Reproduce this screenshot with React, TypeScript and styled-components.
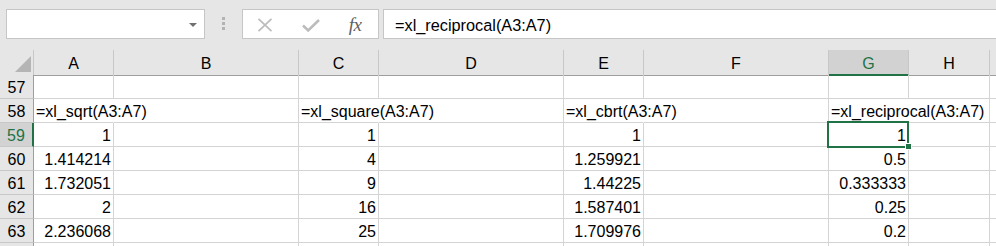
import React from 'react';
import styled, { createGlobalStyle } from 'styled-components';

const GlobalStyle = createGlobalStyle`
  html, body { margin: 0; padding: 0; overflow: hidden; }
  body {
    background: #e6e6e6;
    font-family: "Liberation Sans", Arial, sans-serif;
    color: #000;
  }
`;

const COLS = '34px 80px 185px 80px 185px 80px 185px 80px 81px 1fr';
const GREEN = '#217346';

const Window = styled.div`
  width: 996px;
  height: 246px;
  overflow: hidden;
  display: flex;
  flex-direction: column;
  background: #e6e6e6;
`;

const Toolbar = styled.div`
  display: flex;
  align-items: flex-start;
  height: 50px;
  flex-shrink: 0;
  box-sizing: border-box;
  padding: 9px 0 0 6px;
`;

const Field = styled.div`
  height: 30px;
  box-sizing: border-box;
  background: #fff;
  border: 1px solid #c6c6c6;
`;

const NameBox = styled(Field)`
  width: 199px;
  display: flex;
  align-items: center;
  justify-content: flex-end;
  padding-right: 7px;
`;

const Caret = styled.span`
  width: 0;
  height: 0;
  margin-top: 1px;
  border-left: 4px solid transparent;
  border-right: 4px solid transparent;
  border-top: 4px solid #707070;
`;

const Grip = styled.div`
  width: 37px;
  display: flex;
  flex-direction: column;
  align-items: center;
  gap: 2px;
  padding-top: 8px;
`;

const GripDot = styled.span`
  width: 3px;
  height: 3px;
  background: #b3b3b3;
`;

const FxBox = styled(Field)`
  width: 137px;
  display: flex;
  align-items: center;
  padding: 2px 0 0 14px;
`;

const IconSlot = styled.span<{ $w: number; $gap: number }>`
  width: ${p => p.$w}px;
  margin-right: ${p => p.$gap}px;
  display: flex;
  align-items: center;
  justify-content: center;
`;

const FxLabel = styled.span`
  font-family: "Liberation Serif", "Times New Roman", serif;
  font-style: italic;
  font-size: 19px;
  line-height: 20px;
  color: #5f5f5f;
  letter-spacing: -0.5px;
`;

const FormulaBox = styled(Field)`
  flex: 1;
  margin-left: 4px;
  margin-right: -10px;
  padding: 3px 0 0 11px;
  font-size: 16.3px;
  line-height: 25px;
  white-space: nowrap;
`;

const Sheet = styled.div`
  display: flex;
  flex-direction: column;
  background: #fff;
`;

const HeaderRow = styled.div`
  display: grid;
  grid-template-columns: ${COLS};
  height: 25px;
  background: #e6e6e6;
`;

const ColHeader = styled.div<{ $sel?: boolean; $last?: boolean }>`
  box-sizing: border-box;
  border-right: ${p => (p.$last ? 'none' : '1px solid #c8c8c8')};
  border-bottom: ${p => (p.$sel ? `2px solid ${GREEN}` : '1px solid #9e9e9e')};
  background: ${p => (p.$sel ? '#d2d2d2' : '#e6e6e6')};
  color: ${p => (p.$sel ? GREEN : '#000')};
  text-align: center;
  padding-top: 3px;
  font-size: 16px;
  line-height: 21px;
`;

const Corner = styled(ColHeader)`
  display: flex;
  justify-content: flex-end;
  align-items: flex-end;
  padding: 0 2px 3px 0;
`;

const CornerTriangle = styled.span`
  width: 0;
  height: 0;
  border-left: 16px solid transparent;
  border-bottom: 16px solid #b5b5b5;
`;

const BodyRow = styled.div`
  display: grid;
  grid-template-columns: ${COLS};
  height: 24px;
`;

const RowHeader = styled.div<{ $sel?: boolean }>`
  box-sizing: border-box;
  border-right: ${p => (p.$sel ? `2px solid ${GREEN}` : '1px solid #9e9e9e')};
  border-bottom: 1px solid #c8c8c8;
  background: ${p => (p.$sel ? '#d2d2d2' : '#e6e6e6')};
  color: ${p => (p.$sel ? GREEN : '#000')};
  text-align: center;
  padding-top: 2px;
  font-size: 16px;
  line-height: 21px;
`;

const Cell = styled.div<{ $align: 'left' | 'right'; $spill?: boolean; $last?: boolean; $active?: boolean }>`
  box-sizing: border-box;
  position: ${p => (p.$active ? 'relative' : 'static')};
  border-right: ${p => (p.$last ? 'none' : p.$spill ? '1px solid transparent' : '1px solid #d4d4d4')};
  border-bottom: 1px solid #d4d4d4;
  padding: 2px 2px 0 2px;
  text-align: ${p => p.$align};
  font-size: 16px;
  line-height: 21px;
  white-space: nowrap;
  overflow: visible;
`;

const Selection = styled.span`
  position: absolute;
  left: -2px;
  top: -2px;
  right: -1px;
  bottom: -2px;
  border: 2px solid ${GREEN};
  pointer-events: none;
`;

const FillHandle = styled.span`
  position: absolute;
  right: -4px;
  bottom: -4px;
  width: 5px;
  height: 5px;
  background: ${GREEN};
  border: 1px solid #fff;
`;

const LETTERS = ['A', 'B', 'C', 'D', 'E', 'F', 'G', 'H', ''];

type RowData = { n: number; label: string; values: Record<string, string> };

const ROWS: RowData[] = [
  { n: 57, label: '57', values: {} },
  { n: 58, label: '58', values: { A: '=xl_sqrt(A3:A7)', C: '=xl_square(A3:A7)', E: '=xl_cbrt(A3:A7)', G: '=xl_reciprocal(A3:A7)' } },
  { n: 59, label: '59', values: { A: '1', C: '1', E: '1', G: '1' } },
  { n: 60, label: '60', values: { A: '1.414214', C: '4', E: '1.259921', G: '0.5' } },
  { n: 61, label: '61', values: { A: '1.732051', C: '9', E: '1.44225', G: '0.333333' } },
  { n: 62, label: '62', values: { A: '2', C: '16', E: '1.587401', G: '0.25' } },
  { n: 63, label: '63', values: { A: '2.236068', C: '25', E: '1.709976', G: '0.2' } },
  { n: 64, label: '', values: {} },
];

const isText = (v?: string) => !!v && v.startsWith('=');

const CancelIcon = () => (
  <svg width="16" height="14" viewBox="0 0 16 14">
    <path d="M1.5 0.8 L14.5 13.2 M14.5 0.8 L1.5 13.2" stroke="#bcbcbc" strokeWidth="1.7" fill="none" />
  </svg>
);

const EnterIcon = () => (
  <svg width="18" height="13" viewBox="0 0 18 13">
    <path d="M1 6.5 L6.2 11.4 L17 1" stroke="#bcbcbc" strokeWidth="2.6" fill="none" strokeLinejoin="miter" />
  </svg>
);

export default function App() {
  return (
    <>
      <GlobalStyle />
      <Window>
        <Toolbar>
          <NameBox>
            <Caret />
          </NameBox>
          <Grip>
            <GripDot />
            <GripDot />
            <GripDot />
          </Grip>
          <FxBox>
            <IconSlot $w={16} $gap={29}>
              <CancelIcon />
            </IconSlot>
            <IconSlot $w={18} $gap={26}>
              <EnterIcon />
            </IconSlot>
            <IconSlot $w={18} $gap={0}>
              <FxLabel>fx</FxLabel>
            </IconSlot>
          </FxBox>
          <FormulaBox>=xl_reciprocal(A3:A7)</FormulaBox>
        </Toolbar>
        <Sheet>
          <HeaderRow>
            <Corner>
              <CornerTriangle />
            </Corner>
            {LETTERS.map((l, i) => (
              <ColHeader key={i} $sel={l === 'G'} $last={l === ''}>
                {l}
              </ColHeader>
            ))}
          </HeaderRow>
          {ROWS.map(r => (
            <BodyRow key={r.n}>
              <RowHeader $sel={r.n === 59}>{r.label}</RowHeader>
              {LETTERS.map((l, i) => {
                const v = l ? r.values[l] : undefined;
                const active = l === 'G' && r.n === 59;
                return (
                  <Cell
                    key={i}
                    $align={isText(v) ? 'left' : 'right'}
                    $spill={isText(v)}
                    $last={l === ''}
                    $active={active}
                  >
                    {v}
                    {active && (
                      <>
                        <Selection />
                        <FillHandle />
                      </>
                    )}
                  </Cell>
                );
              })}
            </BodyRow>
          ))}
        </Sheet>
      </Window>
    </>
  );
}
